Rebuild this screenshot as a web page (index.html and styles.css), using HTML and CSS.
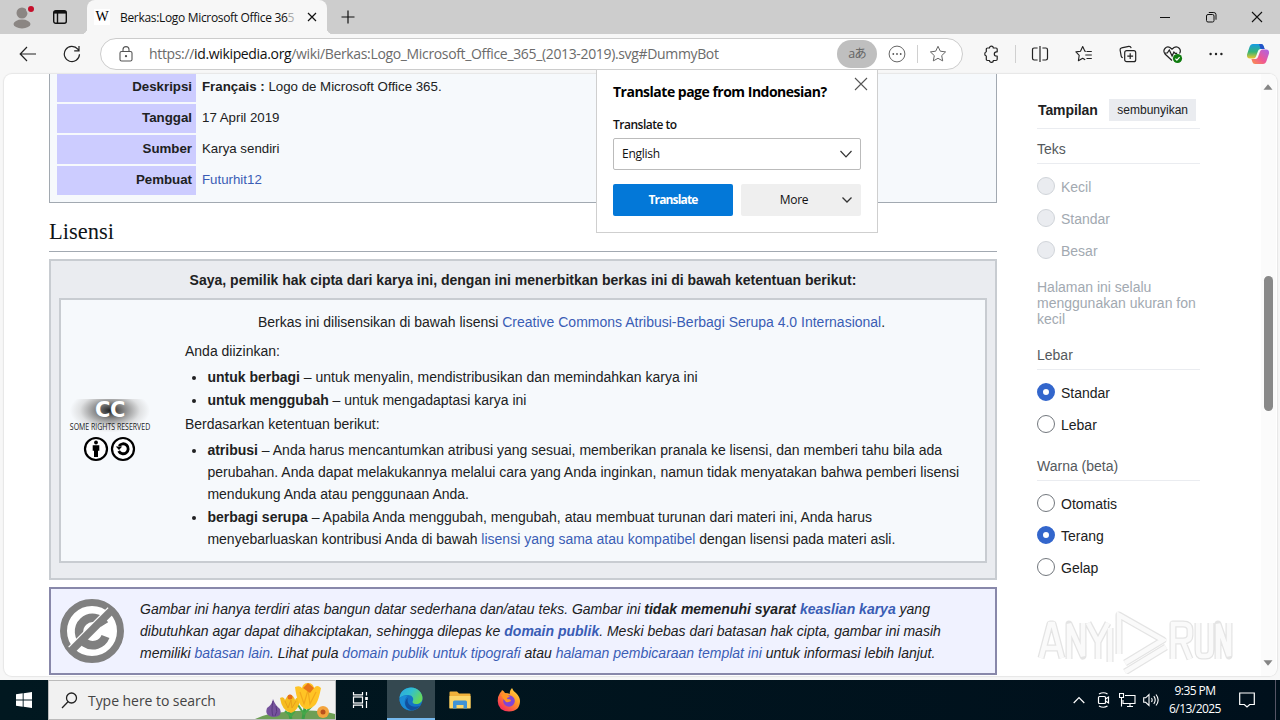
FILE: index.html
```html
<!DOCTYPE html>
<html lang="id">
<head>
<meta charset="utf-8">
<title>Berkas:Logo Microsoft Office 365</title>
<link rel="stylesheet" href="styles.css">
</head>
<body>
<header class="tabbar">
  <svg class="avatar" width="26" height="26" viewBox="0 0 26 26"><circle cx="13" cy="9" r="5.5" fill="#8b8683"/><ellipse cx="13" cy="20" rx="8.5" ry="4.4" fill="#8b8683"/><circle cx="22" cy="5" r="5" fill="#cdcdcd"/><circle cx="22" cy="5" r="3" fill="#c50f2b"/></svg>
  <svg class="tabs-icon" width="16" height="16" viewBox="0 0 16 16" fill="none" stroke="#111" stroke-width="1.4"><rect x="1.7" y="1.7" width="12.6" height="12.6" rx="2"/><path d="M2 3.3h12" stroke-width="2.6"/><path d="M5.5 4v10"/></svg>
  <div class="tab">
    <span class="favicon">W</span>
    <span class="tab-title">Berkas:Logo Microsoft Office 36<i>5</i></span>
    <svg width="10" height="10" viewBox="0 0 10 10" stroke="#111" stroke-width="1.2"><path d="M1 1l8 8M9 1l-8 8"/></svg>
  </div>
  <svg class="newtab" width="14" height="14" viewBox="0 0 14 14" stroke="#111" stroke-width="1.2"><path d="M7 .5v13M.5 7h13"/></svg>
  <div class="winctl">
    <svg width="12" height="12" viewBox="0 0 12 12" stroke="#111"><path d="M1 6.5h10"/></svg>
    <svg width="12" height="12" viewBox="0 0 12 12" stroke="#111" fill="none"><rect x="1.5" y="3.5" width="7.5" height="7.5" rx="1.5"/><path d="M3.8 1.5h5q2.2 0 2.2 2.2v5"/></svg>
    <svg width="12" height="12" viewBox="0 0 12 12" stroke="#111" stroke-width="1.1"><path d="M1 1l10 10M11 1L1 11"/></svg>
  </div>
</header>
<nav class="toolbar">
  <svg class="back" width="18" height="16" viewBox="0 0 18 16" fill="none" stroke="#222" stroke-width="1.2"><path d="M17 8H1.5M8 1L1.2 8 8 15"/></svg>
  <svg class="reload" width="18" height="18" viewBox="0 0 18 18" fill="none" stroke="#222" stroke-width="1.2"><path d="M16.5 9.3A7.6 7.6 0 1 1 14.8 4.2l1 1.3M16 1v4.8h-4.8"/></svg>
  <div class="address">
    <svg class="lock" width="14" height="16" viewBox="0 0 14 16" fill="none" stroke="#555" stroke-width="1.1"><rect x="1" y="5.5" width="12" height="9.5" rx="1.6"/><path d="M4 5.5V3.6a3 3 0 0 1 6 0v1.9"/><circle cx="7" cy="10.2" r=".6" fill="#555"/></svg>
    <span class="url">https://<b>id.wikipedia.org</b>/wiki/Berkas:Logo_Microsoft_Office_365_(2013-2019).svg#DummyBot</span>
    <span class="lang">aあ</span>
    <svg class="dots" width="18" height="18" viewBox="0 0 18 18" fill="none" stroke="#666"><circle cx="9" cy="9" r="7.9"/><g fill="#555" stroke="none"><circle cx="5.3" cy="9" r=".9"/><circle cx="9" cy="9" r=".9"/><circle cx="12.7" cy="9" r=".9"/></g></svg>
    <span class="sep"></span>
    <svg class="star" width="18" height="18" viewBox="0 0 18 18" fill="none" stroke="#666" stroke-linejoin="round"><path d="M9 1.300l2.300 4.900 5.300.700-3.900 3.700 1 5.300L9 13.300l-4.700 2.600 1-5.300L1.400 6.900l5.300-.700z"/></svg>
  </div>
  <svg class="ext" width="18" height="18" viewBox="0 0 18 18" fill="none" stroke="#222" stroke-width="1.200" stroke-linejoin="round"><path d="M5.500 3h2a1.900 1.900 0 0 1 3.800 0H14q1.200 0 1.200 1.200v2.600h-.8a2.100 2.100 0 0 0 0 4.200h.8v3.300q0 1.200-1.200 1.200h-2.700a1.900 1.900 0 0 1-3.800 0h-2q-1.200 0-1.200-1.200V11a2.200 2.200 0 0 1 0-4.200V4.200Q4.300 3 5.500 3z"/></svg>
  <span class="sep ext-sep"></span>
  <svg class="split" width="18" height="18" viewBox="0 0 18 18" fill="none" stroke="#222" stroke-width="1.2"><path d="M6.600 3H3.200Q1.500 3 1.500 4.700v8.600Q1.500 15 3.200 15h3.400M11.400 3h3.400q1.700 0 1.700 1.700v8.600q0 1.700-1.700 1.700h-3.400M9 1v16"/></svg>
  <svg class="favs" width="18" height="18" viewBox="0 0 18 18" fill="none" stroke="#222" stroke-width="1.100" stroke-linejoin="round"><path d="M10.800 6.400L9.900 6.200 7.700 1.500 5.500 6.200.9 6.900l3.300 3.400-.8 5.400 4.300-2.500 2.500 1.500M11.500 6.500h5.300M10.300 10h6.500M11.500 13.500h5.300"/></svg>
  <svg class="coll" width="18" height="18" viewBox="0 0 18 18" fill="none" stroke="#222" stroke-width="1.200"><rect x="5.700" y="5.700" width="11" height="11" rx="2"/><path d="M11.200 8.300v5.800M8.300 11.200h5.800M3.800 12.700q-1.300 0-1.600-1.500L1.100 5q-.2-1.900 1.500-2.200l7.200-1.500q1.900-.2 2.400 1.900"/></svg>
  <svg class="heart" width="20" height="19" viewBox="0 0 20 19" fill="none" stroke="#222" stroke-width="1.200"><path d="M9 15.500L2 9C-1 5 3.200.5 7 2.500l2 1.800 2-1.800c4-2 8 2 5.500 6M1.300 8h3l2-3 2.800 6 1.800-4 1.300 1.400h2"/><circle cx="14.500" cy="13.500" r="4.600" fill="#107c10" stroke="none"/><path d="M12.400 13.600l1.500 1.500 2.700-2.900" stroke="#fff"/></svg>
  <svg class="more" width="16" height="4" viewBox="0 0 16 4" fill="#222"><circle cx="2.600" cy="2" r="1.200"/><circle cx="8" cy="2" r="1.200"/><circle cx="13.400" cy="2" r="1.200"/></svg>
  <svg class="copilot" width="24" height="22" viewBox="0 0 24 22"><defs><linearGradient id="ca" x1="0" y1="0" x2="0" y2="1"><stop offset="0" stop-color="#159be5"/><stop offset=".55" stop-color="#36b475"/><stop offset="1" stop-color="#f2c62d"/></linearGradient><linearGradient id="cb" x1="1" y1="0" x2="0" y2="1"><stop offset="0" stop-color="#a865ea"/><stop offset=".55" stop-color="#ef5794"/><stop offset="1" stop-color="#fb9448"/></linearGradient></defs><path d="M7 1h8q2 0 2.600 2l1 3h-4q-2 0-2.600 2l-2 5.500Q9.300 15.500 7.500 15.500H4q-3.500 0-3-4L3.500 4Q4.500 1 7 1z" fill="url(#ca)"/><path d="M17 21H9q-2 0-2.600-2l-1-3h4q2 0 2.600-2l2-5.500Q14.700 6.500 16.500 6.500H20q3.500 0 3 4L20.500 18q-1 3-3.500 3z" fill="url(#cb)"/><path d="M13 1h2q2 0 2.600 2l1 3h-4z" fill="#2353c8"/></svg>
</nav>
<main class="viewport">
  <div class="page">
    <article class="content">
      <div class="infobox">
        <div class="row"><span class="label">Deskripsi</span><span class="val v1"><b>Français :</b> Logo de Microsoft Office 365.</span></div>
        <div class="row"><span class="label">Tanggal</span><span class="val">17 April 2019</span></div>
        <div class="row"><span class="label">Sumber</span><span class="val">Karya sendiri</span></div>
        <div class="row"><span class="label">Pembuat</span><span class="val"><a>Futurhit12</a></span></div>
      </div>
      <h2>Lisensi</h2>
      <section class="license">
        <p class="owner">Saya, pemilik hak cipta dari karya ini, dengan ini menerbitkan berkas ini di bawah ketentuan berikut:</p>
        <div class="cc">
          <div class="cc-logos">
            <div class="cc-mark"><b>CC</b><span>SOME RIGHTS RESERVED</span></div>
            <svg width="54" height="26" viewBox="0 0 54 26"><g fill="#fff" stroke="#000" stroke-width="2.200"><circle cx="13" cy="13" r="11"/><circle cx="40" cy="13" r="11"/></g><circle cx="13" cy="6.500" r="1.900"/><path d="M9.700 9.200h6.600v5.600H15V21h-4v-6.200H9.700z"/><path d="M36 10a5 5 0 1 1-.3 5" fill="none" stroke="#000" stroke-width="2.800"/><path d="M32.800 10.500h6.400L36 14z"/></svg>
          </div>
          <div class="cc-text">
            <p class="lead">Berkas ini dilisensikan di bawah lisensi <a>Creative Commons Atribusi-Berbagi Serupa 4.0 Internasional</a>.</p>
            <p>Anda diizinkan:</p>
            <ul>
              <li><b>untuk berbagi</b> – untuk menyalin, mendistribusikan dan memindahkan karya ini</li>
              <li><b>untuk menggubah</b> – untuk mengadaptasi karya ini</li>
            </ul>
            <p>Berdasarkan ketentuan berikut:</p>
            <ul>
              <li><b>atribusi</b> – Anda harus mencantumkan atribusi yang sesuai, memberikan pranala ke lisensi, dan memberi tahu bila ada<br>perubahan. Anda dapat melakukannya melalui cara yang Anda inginkan, namun tidak menyatakan bahwa pemberi lisensi<br>mendukung Anda atau penggunaan Anda.</li>
              <li><b>berbagi serupa</b> – Apabila Anda menggubah, mengubah, atau membuat turunan dari materi ini, Anda harus<br>menyebarluaskan kontribusi Anda di bawah <a>lisensi yang sama atau kompatibel</a> dengan lisensi pada materi asli.</li>
            </ul>
          </div>
        </div>
      </section>
      <section class="pd">
        <svg width="64" height="64" viewBox="0 0 64 64"><circle cx="32" cy="32" r="28.500" fill="#fff" stroke="#808080" stroke-width="7"/><path d="M44.500 25.500a13.700 13.700 0 1 0 1 12" fill="none" stroke="#808080" stroke-width="8.500"/><path d="M11 50.500L50.500 11" stroke="#fff" stroke-width="8"/><path d="M11 52L52 11" stroke="#808080" stroke-width="7.500"/></svg>
        <p>Gambar ini hanya terdiri atas bangun datar sederhana dan/atau teks. Gambar ini <b>tidak memenuhi syarat <a>keaslian karya</a></b> yang<br>dibutuhkan agar dapat dihakciptakan, sehingga dilepas ke <b><a>domain publik</a></b>. Meski bebas dari batasan hak cipta, gambar ini masih<br>memiliki <a>batasan lain</a>. Lihat pula <a>domain publik untuk tipografi</a> atau <a>halaman pembicaraan templat ini</a> untuk informasi lebih lanjut.</p>
      </section>
    </article>
    <aside class="side">
      <div class="side-head"><b>Tampilan</b><span>sembunyikan</span></div>
      <h3>Teks</h3>
      <div class="group">
        <label class="off"><i></i>Kecil</label>
        <label class="off"><i></i>Standar</label>
        <label class="off"><i></i>Besar</label>
      </div>
      <p class="note">Halaman ini selalu<br>menggunakan ukuran fon<br>kecil</p>
      <h3>Lebar</h3>
      <div class="group">
        <label class="on"><i></i>Standar</label>
        <label><i></i>Lebar</label>
      </div>
      <h3 class="warna">Warna (beta)</h3>
      <div class="group">
        <label><i></i>Otomatis</label>
        <label class="on"><i></i>Terang</label>
        <label><i></i>Gelap</label>
      </div>
    </aside>
    <div class="scrollbar">
      <svg width="10" height="6" viewBox="0 0 10 6"><path d="M5 .3L9.500 5.700h-9z" fill="#858585"/></svg>
      <span class="thumb"></span>
      <svg width="10" height="6" viewBox="0 0 10 6"><path d="M5 5.700L.5.300h9z" fill="#858585"/></svg>
    </div>
  </div>
</main>
<div class="popup">
  <svg class="close" width="14" height="14" viewBox="0 0 14 14" stroke="#555" stroke-width="1.100"><path d="M1 1l12 12M13 1L1 13"/></svg>
  <div class="p-title">Translate page from Indonesian?</div>
  <div class="p-label">Translate to</div>
  <div class="select"><span>English</span><svg width="14" height="8" viewBox="0 0 14 8" fill="none" stroke="#333" stroke-width="1.200"><path d="M1.500 1L7 6.800 12.500 1"/></svg></div>
  <div class="buttons"><span class="go">Translate</span><span class="opt"><em>More</em><svg width="12" height="8" viewBox="0 0 12 8" fill="none" stroke="#333" stroke-width="1.300"><path d="M1.500 1.500L6 6l4.500-4.500"/></svg></span></div>
</div>
<div class="watermark">
  <svg width="200" height="68" viewBox="0 0 200 68">
    <g fill="none" stroke="#dedede" stroke-width="7" stroke-linejoin="round"><path d="M4 52L13 18h3l9 34M8 42h13M32 53V18l14 32V17M51 17l10 19v17M61 36l10-19M136 53V18h10q7 0 7 6v5q0 6-7 6h-8M146 36l7 17M161 17v27q0 6 4 6h4q5 0 5-6V17M181 53V18l11 32V17"/><path d="M73 22v34M82 48V9l44 25-38 23M88 66l41-25"/></g>
    <g fill="none" stroke="#fafafa" stroke-width="4.500"><path d="M4 52L13 18h3l9 34M8 42h13M32 53V18l14 32V17M51 17l10 19v17M61 36l10-19M136 53V18h10q7 0 7 6v5q0 6-7 6h-8M146 36l7 17M161 17v27q0 6 4 6h4q5 0 5-6V17M181 53V18l11 32V17"/><path d="M73 22v34M82 48V9l44 25-38 23M88 66l41-25"/></g>
  </svg>
</div>
<footer class="taskbar">
  <div class="start"><svg width="16" height="16" viewBox="0 0 16 16" fill="#fff"><path d="M0 2.200L6.700 1.300v6.200H0zM7.600 1.200L16 0v7.500H7.600zM0 8.400h6.700v6.300L0 13.800zM7.600 8.400H16V16l-8.400-1.200z"/></svg></div>
  <div class="search">
    <svg width="17" height="17" viewBox="0 0 17 17" fill="none" stroke="#222" stroke-width="1.300"><circle cx="10.500" cy="6" r="5"/><path d="M7 9.800L1 16"/></svg>
    <span>Type here to search</span>
    <svg class="flowers" width="80" height="38" viewBox="0 0 80 38">
      <path d="M0 38q12-6 30-7 30-4 50 2v5z" fill="#6d9f55"/>
      <path d="M18 18q-1 6-6 9-3 8 7 9 9-1 6-8-5-4-7-10z" fill="#75529c"/><path d="M18 20q-2 10 0 15M21 25q2 6-1 10" stroke="#57397e" fill="none"/>
      <path d="M35 31q0 4 1 7M50 27q-1 6-2 11" stroke="#3b9f47" stroke-width="3"/><path d="M30 30l6 5 4-5M43 24l6 9 8-8" stroke="#45a849" stroke-width="2" fill="none"/>
      <path d="M25 17q4-2 5 2 3-6 6-5 3 1 4 5 2-4 5-2-1 13-9 15-9-2-11-15z" fill="#f5bc20"/><path d="M30 20l3 7 3-8 1 8 4-7" stroke="#e9a01a" fill="none"/><circle cx="35" cy="16" r="2.500" fill="#e66e18"/>
      <path d="M40 6q5-2 7 1 1-5 6-5 5 0 6 5 3-4 7 0-2 11-5 16-5 6-11 5-8-4-10-22z" fill="#ffc425"/><path d="M45 11l4 12 4-14 2 14 6-12" stroke="#f2a81c" stroke-width="1.200" fill="none"/><path d="M48 7l5-5 6 5-4 5z" fill="#e87518"/>
      <circle cx="68" cy="31" r="6" fill="#f3a43d"/><circle cx="68" cy="31" r="2.500" fill="#b9501d"/>
    </svg>
  </div>
  <div class="tv"><svg width="17" height="16" viewBox="0 0 17 16" fill="none" stroke="#fff" stroke-width="1.200"><path d="M1.500 0v2.800h9V0M1.500 16v-2.800h9V16M14.500 0v3.500M14.500 9v7"/><rect x="1.500" y="5" width="9" height="6"/><path d="M14.500 5v3" stroke-width="2.600"/></svg></div>
  <div class="edge"><svg width="24" height="24" viewBox="0 0 24 24"><defs><linearGradient id="eg" x1="0" y1="0" x2="1" y2=".5"><stop offset="0" stop-color="#2ca6e0"/><stop offset=".5" stop-color="#31bfd0"/><stop offset="1" stop-color="#66d85b"/></linearGradient></defs><circle cx="12" cy="12" r="11.500" fill="#1473c6"/><path d="M.5 12C.5 4 7 .5 12 .5 19 .5 23.500 6 23.500 11c0 4-3 6-6.500 6-3 0-4-1.500-3.200-3 1.500-3-1-6-4.800-6-5 0-8.500 2.500-8.500 4z" fill="url(#eg)"/><path d="M9 8.500c-5 3-5 12 3 15C4 23 .5 17 .5 12 2 9 5 8 9 8.500z" fill="#1b8bd6"/><path d="M9 11c-2 5 3 11 12 8-4 5-10 5-13 2-3-4-2-8 1-10z" fill="#124f9c"/></svg></div>
  <div class="folder"><svg width="22" height="18" viewBox="0 0 22 18"><path d="M.5 1.500q0-1 1-1H8l2 2h10.500q1 0 1 1V17H.5z" fill="#f0b13a"/><path d="M.5 5h21v12.500H.5z" fill="#fcd669"/><path d="M4 17.500V11q0-1.500 1.500-1.500h11Q18 9.500 18 11v6.500h-3.500V14h-7v3.500z" fill="#3f93d5"/></svg></div>
  <div class="fox"><svg width="24" height="24" viewBox="0 0 24 24"><defs><linearGradient id="fg" x1="1" y1="0" x2=".2" y2="1"><stop offset="0" stop-color="#ffe44a"/><stop offset=".45" stop-color="#ff9a28"/><stop offset="1" stop-color="#f6245e"/></linearGradient></defs><path d="M3 5q2-2 2-3 2 1 3 3 3 0 5 1-1-3 2-6 1 3 4 5 4 4 4 8 0 10-11 10.500Q1 23 .7 13 .8 8 3 5z" fill="url(#fg)"/><circle cx="12" cy="13" r="5.800" fill="#8045d6"/><path d="M4 7q6-2 9 2-3 0-3 2 4 0 4 2-3 2-5 1-3-3-5-7z" fill="#ff9422"/></svg></div>
  <div class="tray">
    <svg class="chev" width="12" height="8" viewBox="0 0 12 8" fill="none" stroke="#fff" stroke-width="1.200"><path d="M.7 7L6 1.500 11.300 7"/></svg>
    <svg class="cam" width="13" height="16" viewBox="0 0 13 16" fill="none" stroke="#fff" stroke-width="1.200"><rect x="1.500" y="4.500" width="7" height="7" rx="1"/><path d="M8.500 7l3-2v6l-3-2M2 2q4.500-2.500 8.500 0M2 14q4.500 2.500 8.500 0"/></svg>
    <svg class="net" width="17" height="15" viewBox="0 0 17 15" fill="none" stroke="#fff" stroke-width="1.100"><path d="M6 2.500h10v8H4V7M8 13.500h6M11 10.500v3M.5.500h4v4h-4zM2.500 4.500v9"/></svg>
    <svg class="vol" width="17" height="14" viewBox="0 0 17 14" fill="none" stroke="#fff" stroke-width="1.100"><path d="M.7 4.800h2L6 1.500v11L2.700 9.300h-2zM8.500 5q1.300 2 0 4M10.800 3.200q2.800 3.800 0 7.600M13 1.500q4.300 5.500 0 11"/></svg>
    <div class="clock"><span>9:35 PM</span><span class="date">6/13/2025</span></div>
    <svg class="notif" width="16" height="16" viewBox="0 0 16 16" fill="none" stroke="#fff" stroke-width="1.200"><path d="M.7 1h14.600v11.500h-4.600L8 15l-2.700-2.500H.7z"/></svg>
  </div>
</footer>
</body>
</html>
```
FILE: styles.css
```css
* { box-sizing: border-box; }
body { margin: 0; width: 1280px; height: 720px; overflow: hidden; background: #f7f7f7; display: flex; flex-direction: column; font-family: "Liberation Sans", sans-serif; font-size: 14px; color: #202122; position: relative; white-space: nowrap; }
svg { display: block; flex: none; }
p, h2, h3, ul { margin: 0; padding: 0; font-weight: normal; }
a { color: #3a5db5; }

.tabbar { height: 34px; flex: none; background: #cdcdcd; display: flex; align-items: center; font-family: "Open Sans", sans-serif; }
.avatar { margin-left: 9px; }
.tabs-icon { margin-left: 17px; }
.tab { margin-left: 19px; width: 240px; height: 34px; background: #f7f7f7; border-radius: 8px 8px 0 0; display: flex; align-items: center; position: relative; }
.tab::before, .tab::after { content: ""; position: absolute; bottom: 0; width: 6px; height: 6px; }
.tab::before { left: -6px; background: radial-gradient(circle at 0 0, #cdcdcd 6px, #f7f7f7 6.5px); }
.tab::after { right: -6px; background: radial-gradient(circle at 100% 0, #cdcdcd 6px, #f7f7f7 6.5px); }
.favicon { margin-left: 7px; width: 16px; height: 16px; background: #fff; font: 14px/16px "Liberation Serif", serif; text-align: center; color: #000; }
.tab-title { margin-left: 10px; width: 187px; font-size: 12px; letter-spacing: -0.32px; color: #111; }
.tab-title i { font-style: normal; color: #aaa; }
.newtab { margin-left: 14px; }
.winctl { margin-left: auto; margin-right: 17px; display: flex; gap: 34px; }

.toolbar { height: 40px; flex: none; display: flex; align-items: center; background: #f7f7f7; }
.back { margin-left: 19px; }
.reload { margin-left: 26px; }
.address { margin-left: 19px; width: 863px; height: 32px; border: 1px solid #ccc; border-radius: 16px; background: #fff; display: flex; align-items: center; }
.lock { margin-left: 18px; }
.url { margin-left: 16px; width: 688px; font-family: "Open Sans", sans-serif; font-size: 14px; letter-spacing: -0.345px; line-height: 20px; margin-top: -1px; color: #6b6b6b; }
.url b { font-weight: normal; color: #111; }
.lang { width: 40px; height: 28px; border-radius: 14px; background: #bfbfbf; color: #666; text-align: center; font: 12.5px/27px "Open Sans", "Noto Sans CJK JP", sans-serif; letter-spacing: -1px; }
.dots { margin-left: 11px; }
.sep { width: 1px; height: 18px; background: #d0d0d0; }
.address .sep { margin-left: 11px; }
.star { margin-left: 11px; }
.ext { margin-left: 19px; }
.ext-sep { margin-left: 15px; }
.split { margin-left: 15px; }
.favs { margin-left: 26px; }
.coll { margin-left: 26px; }
.heart { margin-left: 26px; }
.more { margin-left: 25px; }
.copilot { margin-left: 22px; }

.viewport { height: 606px; flex: none; padding: 0 3px 4px 4px; display: flex; }
.page { flex: 1; background: #fff; border-radius: 8px; box-shadow: 0 0 1px 1px #e6e6e6; overflow: hidden; display: flex; }
.content { margin-left: 45px; width: 948px; flex: none; }
.infobox { height: 129px; border: 1px solid #a2a9b1; border-top: 0; background: #f6f9fc; padding: 0 7px; display: flex; flex-direction: column; gap: 2px; font-size: 13.3px; letter-spacing: -0.01px; }
.row { display: flex; height: 29px; line-height: 28px; }
.row:first-child { height: 28px; line-height: 26px; }
.label { width: 139px; background: #ccccff; text-align: right; padding-right: 4px; font-weight: bold; }
.val { padding-left: 6px; }
h2 { height: 49px; border-bottom: 1px solid #a2a9b1; font: 22.5px/57px "Liberation Serif", serif; color: #101418; margin-bottom: 7px; }
.license { height: 321px; border: 2px solid #c8ccd1; background: #eaecf0; padding: 8px; }
.owner { font-weight: bold; text-align: center; line-height: 22px; margin-bottom: 7px; }
.cc { height: 265px; border: 2px solid #c8ccd1; background: #f6f9fc; display: flex; }
.cc-logos { width: 96px; margin-left: 1px; padding-top: 99px; display: flex; flex-direction: column; align-items: center; }
.cc-mark { width: 82px; height: 33px; display: flex; flex-direction: column; align-items: center; background: radial-gradient(ellipse 40px 22px at 50% 35%, #222 0%, #8c8c8c 38%, rgba(200,200,200,.5) 75%, transparent 100%); margin-bottom: 4px; }
.cc-mark b { font: bold 21px/22px "DejaVu Sans", sans-serif; height: 23px; color: #fff; letter-spacing: -0.5px; }
.cc-mark span { font: 8.5px/12px "Open Sans", sans-serif; color: #222; transform: scaleX(.82); }
.cc-text { margin-left: 27px; line-height: 22px; padding-top: 11px; }
.lead { width: 773px; text-align: center; margin-bottom: 7px; }
ul { padding-left: 22.4px; margin: 4px 0 2px; }
li { margin-bottom: 1px; }
.pd { margin-top: 7px; height: 88px; border: 2px solid #8888aa; background: #f0f2ff; padding: 10px 9px; display: flex; gap: 16px; font-style: italic; line-height: 22px; }
.pd p { margin-top: -1px; }

.side { margin-left: 40px; width: 163px; flex: none; color: #202122; padding-top: 25px; }
.side-head { height: 30px; display: flex; align-items: flex-start; justify-content: space-between; border-bottom: 1px solid #eaecf0; padding: 0 4px 0 1px; line-height: 22px; }
.side-head b { letter-spacing: -0.1px; }
.side-head span { background: #eaecf0; font-size: 12px; padding: 0 8px; height: 22px; }
.side h3 { font-size: 14px; line-height: 31px; height: 35px; padding-top: 5px; color: #54595d; border-bottom: 1px solid #eaecf0; }
.side .note + h3 { margin-top: 8px; }
.side h3.warna { margin-top: 13px; }
.group { padding-top: 13px; display: flex; flex-direction: column; gap: 14px; }
label { height: 18px; display: flex; align-items: flex-start; gap: 6px; line-height: 20px; }
label i { width: 18px; height: 18px; border-radius: 50%; border: 1px solid #72777d; background: #fff; flex: none; }
label.off { color: #a2a9b1; }
label.off i { background: #eaecf0; border-color: #d0d4d9; }
label.on i { border: 6px solid #36c; }
.note { margin-top: 20px; line-height: 16px; color: #a2a9b1; }
.scrollbar { margin-left: auto; width: 15px; background: #fbfbfb; display: flex; flex-direction: column; align-items: center; padding: 10px 1px 9px 0; transform: translateX(-1px); }
.thumb { width: 9px; height: 135px; margin: 186px 0 249px; border-radius: 5px; background: #898989; }

.popup { position: absolute; left: 596px; top: 69px; width: 282px; height: 164px; background: #fff; border: 1px solid #cfcfcf; padding: 11px 16px; font-family: "Open Sans", sans-serif; font-size: 12px; color: #111; }
.close { position: absolute; right: 9px; top: 7px; }
.p-title { font-weight: bold; font-size: 14px; line-height: 22px; letter-spacing: -0.5px; color: #000; }
.p-label { line-height: 20px; margin-top: 12px; font-weight: 600; letter-spacing: -0.5px; }
.select { margin-top: 3px; height: 32px; border: 1px solid #bbb; border-radius: 2px; display: flex; align-items: center; justify-content: space-between; padding: 0 7px 0 8px; letter-spacing: -0.25px; line-height: 30px; }
.buttons { margin-top: 14px; display: flex; gap: 8px; line-height: 32px; }
.go { width: 120px; background: #0378d8; color: #fff; font-weight: bold; border-radius: 2px; text-align: center; letter-spacing: -0.85px; }
.opt { width: 120px; background: #efefef; border-radius: 2px; display: flex; align-items: center; padding-right: 8px; }
.opt em { flex: 1; font-style: normal; text-align: center; padding-left: 6px; letter-spacing: -0.3px; }
.watermark { position: absolute; left: 1037px; top: 606px; opacity: .8; }

.taskbar { height: 40px; display: flex; align-items: center; font-family: "Open Sans", sans-serif; background: linear-gradient(90deg, #011820, #00101c); }
.start { width: 48px; padding-left: 16px; }
.search { width: 288px; height: 40px; background: #f1f1f1; border: 1px solid #bbb; display: flex; align-items: center; padding-left: 12px; }
.search span { margin-left: 10px; width: 168px; font-size: 14px; letter-spacing: -0.05px; color: #444; }
.flowers { align-self: flex-start; }
.tv { width: 51px; padding-left: 16px; }
.edge { width: 48px; height: 40px; background: #344850; border-bottom: 2px solid #76b9ed; display: flex; align-items: center; justify-content: center; }
.folder { width: 50px; padding-left: 14px; }
.fox { padding-left: 12px; }
.tray { margin-left: auto; display: flex; align-items: center; color: #fff; font-size: 12px; height: 40px; border-right: 1px solid #556; padding-right: 20px; margin-right: 4px; }
.cam { margin-left: 12px; }
.net { margin-left: 9px; }
.vol { margin-left: 7px; }
.clock { width: 70px; display: flex; flex-direction: column; line-height: 18px; text-align: center; letter-spacing: -0.55px; margin-top: -1px; }
.notif { margin-left: 9px; }
```
